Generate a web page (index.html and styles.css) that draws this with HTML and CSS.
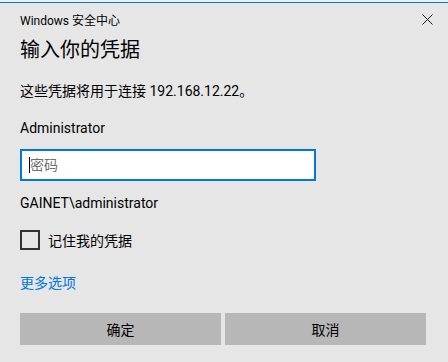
FILE: index.html
```html
<!DOCTYPE html>
<html lang="zh-CN">

<head>
  <meta charset="UTF-8">
  <meta name="viewport" content="width=device-width, initial-scale=1.0">
  <title>Windows 安全中心</title>
  <link rel="stylesheet" href="styles.css">
</head>

<body>
  <div class="topline"></div>
  <div class="titlebar">
    <span class="apptitle">Windows 安全中心</span>
    <span class="close">
      <svg width="11" height="11" viewBox="0 0 11 11">
        <path d="M0.5 0.5 L10.5 10.5 M10.5 0.5 L0.5 10.5" stroke="#1a1a1a" stroke-width="1" fill="none" />
      </svg>
    </span>
  </div>

  <div class="content">
    <h1 class="heading">输入你的凭据</h1>
    <p class="info">这些凭据将用于连接 192.168.12.22。</p>

    <div class="user">Administrator</div>
    <div class="field">
      <input type="password" class="password" placeholder="密码">
      <span class="caret"></span>
    </div>
    <div class="domain">GAINET\administrator</div>

    <label class="remember">
      <span class="box"></span>
      <span>记住我的凭据</span>
    </label>

    <a class="more" href="#">更多选项</a>

    <div class="buttons">
      <button class="btn">确定</button>
      <button class="btn">取消</button>
    </div>
  </div>
</body>

</html>
```

FILE: styles.css
```css
html {
  background: #e6e6e6;
}

body {
  margin: 0;
  color: #000;
  font-family: Roboto, "Noto Sans CJK SC", sans-serif;
  font-size: 14px;
}

.topline {
  height: 2px;
  background: #efefef;
  border-bottom: 1px solid #0078d7;
}

.titlebar {
  height: 32px;
  display: flex;
  align-items: center;
  justify-content: space-between;
  padding: 0 15px 0 20px;
}

.apptitle {
  font-size: 12px;
}

.close {
  display: flex;
  width: 11px;
  height: 11px;
}

.content {
  padding: 0 22px 0 20px;
}

.heading {
  margin: 1px 0 0;
  font-size: 20px;
  font-weight: normal;
  line-height: 28px;
}

.info {
  margin: 17px 0 0;
  line-height: 20px;
}

.user {
  margin-top: 17px;
  line-height: 20px;
}

.field {
  position: relative;
  margin-top: 11px;
  width: 296px;
  height: 32px;
}

.password {
  box-sizing: border-box;
  width: 100%;
  height: 100%;
  margin: 0;
  border: 2px solid #0078d7;
  background: #fff;
  padding: 0 8px;
  font-family: Roboto, "Noto Sans CJK SC", sans-serif;
  font-size: 14px;
  outline: none;
}

.password::placeholder {
  color: #707070;
}

.caret {
  position: absolute;
  left: 9px;
  top: 8px;
  width: 1px;
  height: 16px;
  background: #000;
}

.domain {
  margin-top: 12px;
  line-height: 20px;
}

.remember {
  display: flex;
  align-items: center;
  margin-top: 17px;
  height: 20px;
}

.box {
  box-sizing: border-box;
  width: 20px;
  height: 20px;
  border: 2px solid #333;
  margin-right: 8px;
}

.more {
  display: block;
  margin-top: 23px;
  line-height: 20px;
  color: #0078d7;
  text-decoration: none;
  width: max-content;
}

.buttons {
  display: flex;
  gap: 4px;
  margin-top: 20px;
}

.btn {
  flex: 1;
  height: 32px;
  border: none;
  background: #b7b7b7;
  color: #000;
  font-family: Roboto, "Noto Sans CJK SC", sans-serif;
  font-size: 14px;
  padding: 0;
}
```
